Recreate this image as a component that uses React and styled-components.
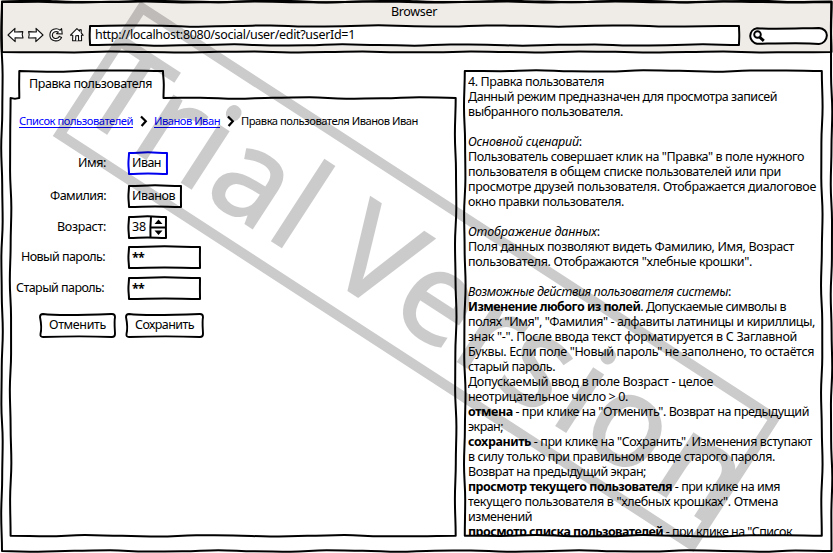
import React, { useLayoutEffect, useRef } from "react";
import styled, { createGlobalStyle, css } from "styled-components";

const Global = createGlobalStyle`
  * { box-sizing: border-box; }
  html, body { margin: 0; padding: 0; overflow: hidden; background: #fff; }
  body { font: 12.5px/15px "Noto Sans", "Open Sans", sans-serif; color: #000; }
`;

/* ---------- text fitted to a fixed run length ---------- */

const Run = styled.span`
  display: inline-block;
  white-space: pre;
  width: max-content;
`;

function Fit({ width, children }) {
  const ref = useRef(null);
  useLayoutEffect(() => {
    const el = ref.current;
    el.style.letterSpacing = "0px";
    const natural = el.getBoundingClientRect().width;
    el.style.letterSpacing = `${(width - natural) / el.textContent.length}px`;
  }, [width]);
  return <Run ref={ref}>{children}</Run>;
}

/* ---------- hand-drawn outlines ---------- */

function edge(x1, y1, x2, y2, seed, amp) {
  const len = Math.hypot(x2 - x1, y2 - y1);
  const n = Math.max(2, Math.round(len / 36));
  const nx = -(y2 - y1) / len;
  const ny = (x2 - x1) / len;
  const pts = [];
  for (let i = 0; i <= n; i++) {
    const t = i / n;
    const end = i === 0 || i === n;
    const o = end ? 0 : amp * Math.sin(i * 1.9 + seed);
    pts.push([x1 + (x2 - x1) * t + nx * o, y1 + (y2 - y1) * t + ny * o]);
  }
  let d = "";
  for (let i = 1; i < pts.length; i++) {
    const [ax, ay] = pts[i - 1];
    const [bx, by] = pts[i];
    const mx = (bx - ax) / 2.4;
    const my = (by - ay) / 2.4;
    const h = Math.abs(x2 - x1) > Math.abs(y2 - y1);
    d += h
      ? `C${ax + mx} ${ay} ${bx - mx} ${by} ${bx} ${by}`
      : `C${ax} ${ay + my} ${bx} ${by - my} ${bx} ${by}`;
  }
  return d;
}

function outline(points, seed, amp) {
  let d = `M${points[0][0]} ${points[0][1]}`;
  points.forEach((p, i) => {
    const q = points[(i + 1) % points.length];
    d += edge(p[0], p[1], q[0], q[1], seed + i * 2, amp);
  });
  return d + "Z";
}

const Ink = styled.svg`
  position: absolute;
  inset: 0;
  width: 100%;
  height: 100%;
  overflow: visible;
  pointer-events: none;
`;

function Outline({ w, h, points, seed = 1, amp = 0.8, color = "#000", fill = "none", stroke = 2 }) {
  const pts = points || [[1, 1], [w - 1, 1], [w - 1, h - 1], [1, h - 1]];
  return (
    <Ink viewBox={`0 0 ${w} ${h}`}>
      <path d={outline(pts, seed, amp)} fill={fill} stroke={color} strokeWidth={stroke} strokeLinejoin="round" />
    </Ink>
  );
}

/* ---------- browser chrome ---------- */

const Window = styled.div`
  position: relative;
  width: 833px;
  height: 553px;
  display: flex;
  flex-direction: column;
  overflow: hidden;
  background: #fff;
`;

const Chrome = styled.header`
  position: relative;
  height: 52px;
  flex: none;
  background: #efebe7;
`;

const Title = styled.div`
  height: 25px;
  padding-top: 4px;
  padding-left: 391px;
`;

const Toolbar = styled.div`
  display: flex;
  align-items: flex-start;
  padding-left: 7px;
`;

const NavIcons = styled.div`
  display: flex;
  gap: 3px;
  width: 82px;
  padding-top: 2px;
`;

const Icon = styled.svg`
  width: 18px;
  height: 16px;
  flex: none;
  fill: #fff;
  stroke: #111;
  stroke-width: 1.1;
  stroke-linejoin: round;
  stroke-linecap: round;
`;

const Address = styled.div`
  position: relative;
  width: 651px;
  height: 21px;
  background: #fff;
  padding: 2px 0 0 6px;
`;

const Search = styled.div`
  position: relative;
  width: 79px;
  height: 18px;
  margin: 2px 0 0 9px;
`;

const Body = styled.main`
  display: flex;
  flex: 1;
  padding: 18px 9px 15px 9px;
  gap: 6px;
`;

/* ---------- left side ---------- */

const TabPanel = styled.section`
  position: relative;
  width: 448px;
  height: 467px;
`;

const TabTitle = styled.div`
  height: 28px;
  padding: 6px 0 0 20px;
`;

const Crumbs = styled.nav`
  display: flex;
  align-items: center;
  height: 16px;
  margin-top: 15px;
  padding-left: 10px;
  font-size: 11.2px;
`;

const Crumb = styled.span`
  width: ${(p) => p.$w}px;
  height: 14px;
  line-height: 14px;
  ${(p) =>
    p.$link &&
    css`
      color: #0000ff;
      border-bottom: 1px solid #0000ff;
    `}
`;

const Chevron = styled.svg`
  width: 21px;
  height: 12px;
  flex: none;
  fill: none;
  stroke: #000;
  stroke-width: 2.2;
`;

const Form = styled.div`
  display: flex;
  flex-direction: column;
  padding-top: 23px;
`;

const FormRow = styled.div`
  display: flex;
  align-items: flex-start;
  height: ${(p) => p.$h}px;
`;

const Label = styled.label`
  display: flex;
  justify-content: flex-end;
  width: ${(p) => p.$end}px;
  margin-right: ${(p) => 119 - p.$end}px;
  padding-top: 3px;
`;

const Field = styled.div`
  position: relative;
  width: ${(p) => p.$w}px;
  height: 23px;
  padding: 3px 0 0 4px;
`;

const Secret = styled.span`
  display: block;
  padding-top: 1px;
  font-weight: 700;
`;

const Buttons = styled.div`
  display: flex;
  gap: 9px;
  padding: 3px 0 0 30px;
`;

const Button = styled.div`
  position: relative;
  width: ${(p) => p.$w}px;
  height: 25px;
  padding: 4px 0 0 10px;
`;

/* ---------- right side ---------- */

const Notes = styled.section`
  position: relative;
  width: 360px;
  height: 467px;
  padding: 4px 0 0 5px;
`;

const NotesText = styled.div`
  height: 462px;
  overflow: hidden;
`;

const Line = styled.div`
  height: 15px;
`;

const Watermark = styled.svg`
  position: absolute;
  inset: 0;
  width: 833px;
  height: 553px;
  opacity: 0.2;
  pointer-events: none;
`;

const B = styled.b`
  font-weight: 700;
`;

const I = styled.i`
  font-style: italic;
`;

const NOTES = [
  [136, "4. Правка пользователя"],
  [309, "Данный режим предназначен для просмотра записей"],
  [155, "выбранного пользователя."],
  null,
  [114, <><I>Основной сценарий</I>:</>],
  [336, "Пользователь совершает клик на \"Правка\" в поле нужного"],
  [313, "пользователя в общем списке пользователей или при"],
  [348, "просмотре друзей пользователя. Отображается диалоговое"],
  [156, "окно правки пользователя."],
  null,
  [132, <><I>Отображение данных</I>:</>],
  [326, "Поля данных позволяют видеть Фамилию, Имя, Возраст"],
  [284, "пользователя. Отображаются \"хлебные крошки\"."],
  null,
  [263, <><I>Возможные действия пользователя системы</I>:</>],
  [318, <><B>Изменение любого из полей</B>. Допускаемые символы в</>],
  [347, "полях \"Имя\", \"Фамилия\" - алфавиты латиницы и кириллицы,"],
  [329, "знак \"-\". После ввода текст форматируется в С Заглавной"],
  [346, "Буквы. Если поле \"Новый пароль\" не заполнено, то остаётся"],
  [87, "старый пароль."],
  [245, "Допускаемый ввод в поле Возраст - целое"],
  [160, "неотрицательное число > 0."],
  [341, <><B>отмена</B> - при клике на "Отменить". Возврат на предыдущий</>],
  [35, "экран;"],
  [344, <><B>сохранить</B> - при клике на "Сохранить". Изменения вступают</>],
  [307, "в силу только при правильном вводе старого пароля."],
  [178, "Возврат на предыдущий экран;"],
  [312, <><B>просмотр текущего пользователя</B> - при клике на имя</>],
  [310, "текущего пользователя в \"хлебных крошках\". Отмена"],
  [64, "изменений"],
  [324, <><B>просмотр списка пользователей</B> - при клике на "Список</>],
];

const FIELDS = [
  { label: "Имя:", lw: 28, end: 97, value: "Иван", vw: 29, w: 40, h: 33, color: "#0000ee" },
  { label: "Фамилия:", lw: 56, end: 97, value: "Иванов", vw: 43, w: 54, h: 31 },
  { label: "Возраст:", lw: 49, end: 97, value: "38", vw: 14, w: 39, h: 30, spin: true },
  { label: "Новый пароль:", lw: 84, end: 96, value: "**", vw: 12, w: 73, h: 31, secret: true },
  { label: "Старый пароль:", lw: 88, end: 95, value: "**", vw: 12, w: 73, h: 33, secret: true },
];

function Separator() {
  return (
    <Chevron viewBox="0 0 21 12">
      <path d="M8 1.5 L12.8 6.2 L8.6 11" />
    </Chevron>
  );
}

function PushButton({ w, textWidth, children }) {
  return (
    <Button $w={w}>
      <Ink viewBox={`0 0 ${w} 25`}>
        <path
          d={`M4 1 C20 3 ${w * 0.6} 2 ${w - 4} 1 Q${w - 1} 1 ${w - 1} 4 C${w - 2} 10 ${w - 1} 17 ${w - 1} 21 Q${w - 1} 24 ${w - 4} 24 C${w * 0.6} 23 20 23.5 4 24 Q1 24 1.5 21 C3 15 2 9 1 4 Q1 1 4 1Z`}
          fill="none"
          stroke="#000"
          strokeWidth="1.9"
        />
      </Ink>
      <Fit width={textWidth}>{children}</Fit>
    </Button>
  );
}

export default function App() {
  return (
    <>
      <Global />
      <Window>
        <Chrome>
          <Title><Fit width={46}>Browser</Fit></Title>
          <Toolbar>
            <NavIcons>
              <Icon viewBox="0 0 18 16">
                <path d="M1 8 L8 1.3 L7.6 5 L15.8 4.6 L15.2 7.6 L16 11 L8 10.8 L8.2 14.6Z" />
              </Icon>
              <Icon viewBox="0 0 18 16">
                <path d="M15 8 L8 1.3 L8.4 5 L.6 4.6 L1.2 7.6 L.6 11 L8 10.8 L7.8 14.6Z" />
              </Icon>
              <Icon viewBox="0 0 18 16">
                <path d="M12.6 1.6 L13.2 7 L7.6 6.6 L9.3 5 C6.5 3.6 3.4 5.3 3.3 8 C3.3 11.7 8.2 13 10.4 9.4 L12.6 10.4 C9.5 16 .8 14.5 .9 8 C1 2.2 7.3 .2 11.2 3.2Z" />
              </Icon>
              <Icon viewBox="0 0 18 16">
                <path d="M.5 8.2 L6.9 1.6 L9.6 4.2 L9.8 2.6 L11.3 2.7 L11.2 5.8 L13.2 8.3 L11.4 8.2 L11.6 13.6 L2.6 13.8 L2.8 8.2Z" />
                <path d="M5.6 13.4 L5.8 8.8 L8.5 8.6 L8.6 13.4" />
              </Icon>
            </NavIcons>
            <Address>
              <Outline w={651} h={21} seed={2} amp={0.7} />
              <Fit width={260}>http://localhost:8080/social/user/edit?userId=1</Fit>
            </Address>
            <Search>
              <Ink viewBox="0 0 79 18">
                <path
                  d="M8 1.2 C25 2.4 45 1.4 70 .9 C75 1.2 78 5 77.8 8.5 C78 13 74 16.8 70 16.9 C55 15.6 30 16.4 8 16.8 C4 16 1.3 12.5 1.2 9 C1.4 5 4 1.7 8 1.2Z"
                  fill="#fff"
                  stroke="#000"
                  strokeWidth="2"
                />
                <circle cx="8.5" cy="7.5" r="3.3" fill="none" stroke="#000" strokeWidth="1.9" />
                <path d="M10.5 10 L14.8 13.8" stroke="#000" strokeWidth="3" />
              </Ink>
            </Search>
          </Toolbar>
          <Outline w={833} h={52} points={[[2, 2], [831.5, 2], [831.5, 52], [2, 52]]} seed={4} amp={0.6} />
        </Chrome>

        <Body>
          <TabPanel>
            <Outline
              w={448}
              h={467}
              seed={0}
              points={[[10.3, 1], [154, 1], [154.5, 28], [446.7, 28], [446.7, 465.8], [1.6, 465.8], [1.6, 28], [10.3, 28]]}
            />
            <TabTitle><Fit width={123}>Правка пользователя</Fit></TabTitle>
            <Crumbs>
              <Crumb $w={114} $link><Fit width={114}>Список пользователей</Fit></Crumb>
              <Separator />
              <Crumb $w={66} $link><Fit width={66}>Иванов Иван</Fit></Crumb>
              <Separator />
              <Crumb $w={178}><Fit width={177}>Правка пользователя Иванов Иван</Fit></Crumb>
            </Crumbs>
            <Form>
              {FIELDS.map((f) => (
                <FormRow key={f.label} $h={f.h}>
                  <Label $end={f.end}><Fit width={f.lw}>{f.label}</Fit></Label>
                  <Field $w={f.w}>
                    <Outline w={f.w} h={23} seed={2.5} amp={0.7} color={f.color} />
                    {f.spin && (
                      <Ink viewBox="0 0 39 23">
                        <path d="M23 1 Q22 11 22.5 22 M23 11.5 L38 11.5" fill="none" stroke="#000" strokeWidth="2" />
                        <path d="M26.5 8 L30.5 3.5 L34.5 8Z M26.5 14.5 L34.5 14.5 L30.5 19Z" />
                      </Ink>
                    )}
                    {f.secret ? (
                      <Secret><Fit width={f.vw}>{f.value}</Fit></Secret>
                    ) : (
                      <Fit width={f.vw}>{f.value}</Fit>
                    )}
                  </Field>
                </FormRow>
              ))}
            </Form>
            <Buttons>
              <PushButton w={77} textWidth={57}>Отменить</PushButton>
              <PushButton w={79} textWidth={59}>Сохранить</PushButton>
            </Buttons>
          </TabPanel>

          <Notes>
            <Outline
              w={360}
              h={467}
              seed={1}
              points={[[1.8, 1], [358.8, 1], [358.8, 465.8], [1.8, 465.8]]}
            />
            <NotesText>
              {NOTES.map((n, i) => (
                <Line key={i}>{n && <Fit width={n[0]}>{n[1]}</Fit>}</Line>
              ))}
            </NotesText>
          </Notes>
        </Body>

        <Outline w={833} h={553} points={[[2, 1.5], [831.5, 1.5], [831.5, 551], [2, 551]]} seed={3} />

        <Watermark viewBox="0 0 833 553">
          <g transform="translate(417 276.5) rotate(33)">
            <rect x="-377" y="-75.5" width="754" height="151" fill="none" stroke="#000" strokeWidth="10" />
            <text
              y="49"
              x="-379 -313 -259 -225 -151.5 -110 -82 -4 70 121 187.5 222 307"
              fontFamily="'Noto Sans', sans-serif"
              fontSize="126.5"
              stroke="#000"
              strokeWidth="2"
            >
              Trial Version
            </text>
          </g>
        </Watermark>
      </Window>
    </>
  );
}
